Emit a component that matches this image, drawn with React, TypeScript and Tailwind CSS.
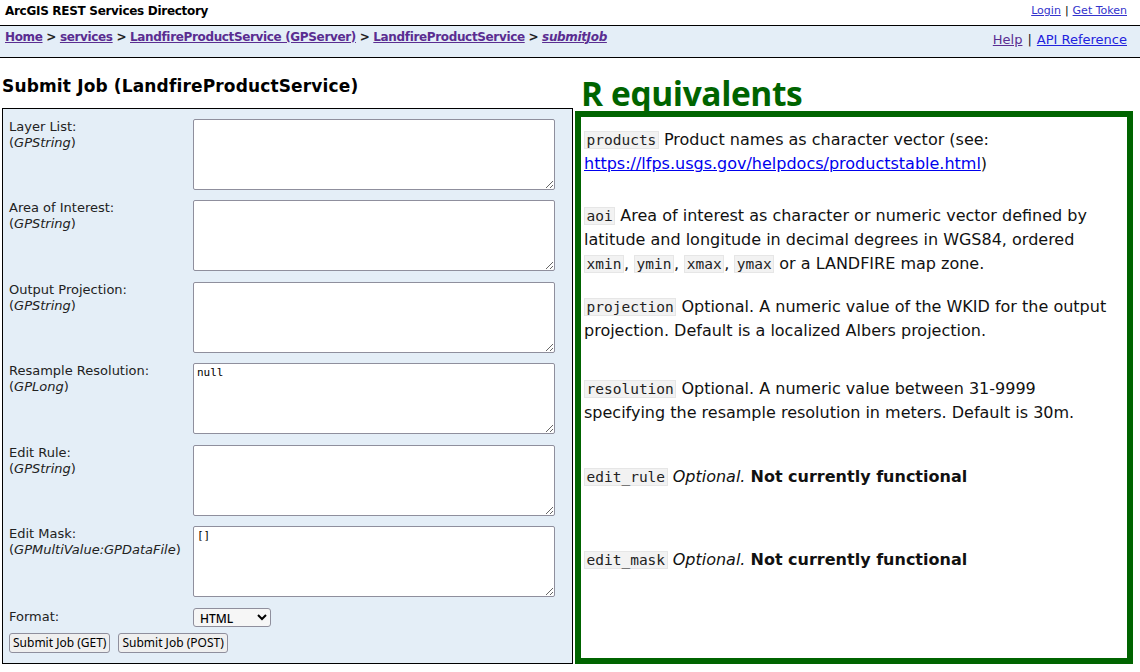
import React from "react";

interface Param {
    label: string;
    type: string;
    value: string;
}

const params: Param[] = [
    { label: "Layer List:", type: "GPString", value: "" },
    { label: "Area of Interest:", type: "GPString", value: "" },
    { label: "Output Projection:", type: "GPString", value: "" },
    { label: "Resample Resolution:", type: "GPLong", value: "null" },
    { label: "Edit Rule:", type: "GPString", value: "" },
    { label: "Edit Mask:", type: "GPMultiValue:GPDataFile", value: "[]" },
];

const Code = ({ children }: { children: React.ReactNode }) => (
    <code className="font-['DejaVu_Sans_Mono',monospace] text-[14.5px] leading-[18px] bg-[#f2f2f2] border border-[#e6e6e6] px-[1.5px] text-[#222]">
        {children}
    </code>
);

export default function App() {
    return (
        <div className="w-[1140px] h-[672px] bg-white overflow-hidden font-['DejaVu_Sans',Verdana,sans-serif] text-black">
            {/* top bar */}
            <div className="flex items-center justify-between h-[25px] px-[5px] pb-[3px]">
                <div className="text-[12px] font-bold tracking-[-0.3px]">ArcGIS REST Services Directory</div>
                <div className="text-[11px] pr-[8px]">
                    <a href="#" className="text-[#3333cc] underline">Login</a>
                    <span className="mx-[4px]">|</span>
                    <a href="#" className="text-[#3333cc] underline">Get Token</a>
                </div>
            </div>

            {/* breadcrumbs */}
            <div className="flex justify-between h-[33px] bg-[#e4eef7] border-y border-black px-[5px]">
                <div className="text-[12px] font-bold text-[#222] pt-[2px] tracking-[-0.35px]">
                    <a href="#" className="text-[#5a2d91] underline">Home</a>
                    {" > "}
                    <a href="#" className="text-[#5a2d91] underline">services</a>
                    {" > "}
                    <a href="#" className="text-[#5a2d91] underline">LandfireProductService (GPServer)</a>
                    {" > "}
                    <a href="#" className="text-[#5a2d91] underline">LandfireProductService</a>
                    {" > "}
                    <a href="#" className="text-[#5a2d91] underline italic">submitJob</a>
                </div>
                <div className="text-[13px] pt-[4px] pr-[8px]">
                    <a href="#" className="text-[#5a2d91] underline">Help</a>
                    <span className="mx-[5px] text-[#222]">|</span>
                    <a href="#" className="text-[#2222dd] underline">API Reference</a>
                </div>
            </div>

            <div className="flex">
                {/* left: form */}
                <div className="w-[573px] pl-[2px]">
                    <h2 className="text-[17px] font-bold mt-[16px] h-[34px] tracking-[0.15px]">
                        Submit Job (LandfireProductService)
                    </h2>
                    <div className="border border-black bg-[#e4eef7] h-[556px] pt-[10px] px-[6px]">
                        <div className="flex flex-col gap-[10.4px]">
                            {params.map((p) => (
                                <div key={p.label} className="flex">
                                    <div className="w-[184px] text-[13px] leading-[16px] text-[#222]">
                                        {p.label}
                                        <br />(<i>{p.type}</i>)
                                    </div>
                                    <textarea
                                        defaultValue={p.value}
                                        className="w-[362px] h-[71px] bg-white border border-[#8f8f9d] rounded-[2px] px-[3px] py-[2px] font-['DejaVu_Sans_Mono',monospace] text-[11px] leading-[13px]"
                                    />
                                </div>
                            ))}
                            <div className="flex items-center">
                                <div className="w-[184px] text-[13px] text-[#222]">Format:</div>
                                <select className="w-[78px] h-[19px] bg-[#f6f6f6] border border-[#8f8f9d] rounded-[3px] text-[12px] font-medium font-['Noto_Sans',sans-serif] pl-[2px]">
                                    <option>HTML</option>
                                </select>
                            </div>
                        </div>
                        <div className="flex gap-[8px] mt-[6px]">
                            <button className="h-[20px] px-[3px] bg-[#efefef] border border-[#8f8f9d] rounded-[3px] text-[12px] font-['Noto_Sans',sans-serif] leading-[16px]">
                                Submit Job (GET)
                            </button>
                            <button className="h-[20px] px-[3px] bg-[#efefef] border border-[#8f8f9d] rounded-[3px] text-[12px] font-['Noto_Sans',sans-serif] leading-[16px]">
                                Submit Job (POST)
                            </button>
                        </div>
                    </div>
                </div>

                {/* right: R equivalents */}
                <div className="w-[558px] ml-[2px]">
                    <h1 className="h-[53px] pt-[15px] pl-[6px] text-[33.5px] leading-[40px] font-bold text-[#006400] font-['Open_Sans',sans-serif] tracking-[-0.4px]">
                        R equivalents
                    </h1>
                    <div className="border-[6px] border-[#006400] h-[553px] pl-[3px] pr-[8px] text-[16px] leading-[24px] text-[#111]">
                        <p className="mt-[11px]">
                            <Code>products</Code> Product names as character vector (see:{" "}
                            <a href="#" className="text-[#0000ee] underline">https://lfps.usgs.gov/helpdocs/productstable.html</a>)
                        </p>
                        <p className="mt-[28px]">
                            <Code>aoi</Code> Area of interest as character or numeric vector defined by latitude and
                            longitude in decimal degrees in WGS84, ordered <Code>xmin</Code>, <Code>ymin</Code>,{" "}
                            <Code>xmax</Code>, <Code>ymax</Code> or a LANDFIRE map zone.
                        </p>
                        <p className="mt-[19px]">
                            <Code>projection</Code> Optional. A numeric value of the WKID for the output projection.
                            Default is a localized Albers projection.
                        </p>
                        <p className="mt-[34px]">
                            <Code>resolution</Code> Optional. A numeric value between 31-9999 specifying the resample
                            resolution in meters. Default is 30m.
                        </p>
                        <p className="mt-[40px]">
                            <Code>edit_rule</Code> <i>Optional.</i> <b>Not currently functional</b>
                        </p>
                        <p className="mt-[59px]">
                            <Code>edit_mask</Code> <i>Optional.</i> <b>Not currently functional</b>
                        </p>
                    </div>
                </div>
            </div>
        </div>
    );
}
